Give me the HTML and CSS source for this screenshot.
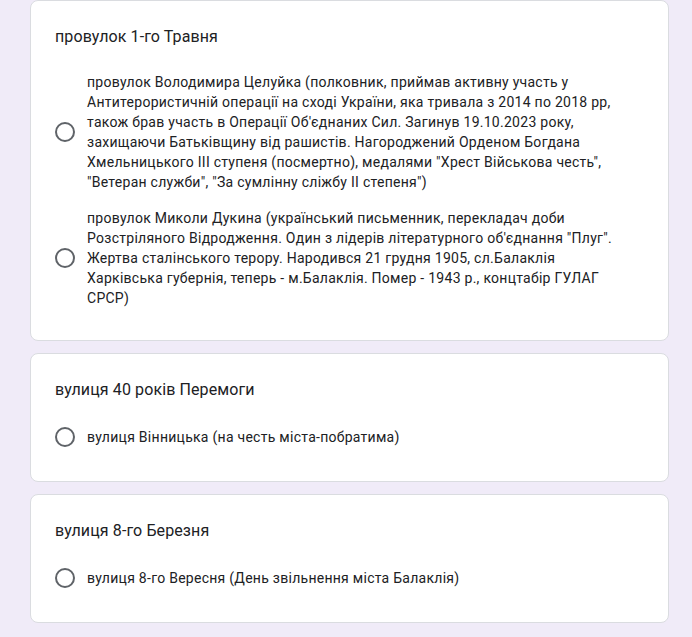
FILE: index.html
```html
<!DOCTYPE html>
<html lang="uk">
<head>
  <meta charset="UTF-8" />
  <meta name="viewport" content="width=device-width, initial-scale=1.0"/>
  <title>Перейменування вулиць</title>
  <link rel="stylesheet" href="styles.css">
</head>
<body>

  <div class="page">

    <!-- Question 1 -->
    <div class="card">
      <div class="question">провулок 1-го Травня</div>
      <div class="options">
        <label class="option">
          <span class="radio-box"><span class="radio"></span></span>
          <span class="option-text">провулок Володимира Целуйка (полковник, приймав активну участь у Антитерористичній операції на сході України, яка тривала з 2014 по 2018 рр, також брав участь в Операції Об'єднаних Сил. Загинув 19.10.2023 року, захищаючи Батьківщину від рашистів. Нагороджений Орденом Богдана Хмельницького ІІІ ступеня (посмертно), медалями "Хрест Військова честь", "Ветеран служби", "За сумлінну сліжбу ІІ степеня")</span>
        </label>
        <label class="option">
          <span class="radio-box"><span class="radio"></span></span>
          <span class="option-text">провулок Миколи Дукина (український письменник, перекладач доби Розстріляного Відродження. Один з лідерів літературного об'єднання "Плуг". Жертва сталінського терору. Народився 21 грудня 1905, сл.Балаклія Харківська губернія, теперь - м.Балаклія. Помер - 1943 р., концтабір ГУЛАГ СРСР)</span>
        </label>
      </div>
    </div>

    <!-- Question 2 -->
    <div class="card">
      <div class="question">вулиця 40 років Перемоги</div>
      <div class="options">
        <label class="option">
          <span class="radio-box"><span class="radio"></span></span>
          <span class="option-text">вулиця Вінницька (на честь міста-побратима)</span>
        </label>
      </div>
    </div>

    <!-- Question 3 -->
    <div class="card">
      <div class="question">вулиця 8-го Березня</div>
      <div class="options">
        <label class="option">
          <span class="radio-box"><span class="radio"></span></span>
          <span class="option-text">вулиця 8-го Вересня (День звільнення міста Балаклія)</span>
        </label>
      </div>
    </div>

  </div>

</body>
</html>
```

FILE: styles.css
```css
body {
  font-family: Roboto, "Noto Sans", Arial, sans-serif;
  background: #f0ebf8;
  margin: 0;
  color: #202124;
}
.page {
  padding: 0 0 20px 30px;
}
.card {
  box-sizing: border-box;
  width: 639px;
  background: #fff;
  border: 1px solid #dadce0;
  border-radius: 8px;
  padding: 24px;
  margin-bottom: 12px;
}
.question {
  font-size: 16px;
  line-height: 24px;
  letter-spacing: 0.1px;
}
.options {
  margin-top: 15px;
}
.option {
  display: flex;
  align-items: center;
  gap: 12px;
  padding: 8px 0;
  cursor: pointer;
}
.radio-box {
  flex: none;
  width: 20px;
  height: 24px;
  display: flex;
  align-items: center;
}
.radio {
  box-sizing: border-box;
  width: 20px;
  height: 20px;
  border: 2px solid #5f6368;
  border-radius: 50%;
}
.option-text {
  font-size: 14px;
  line-height: 20px;
  letter-spacing: 0.27px;
  padding-right: 16px;
}
```
